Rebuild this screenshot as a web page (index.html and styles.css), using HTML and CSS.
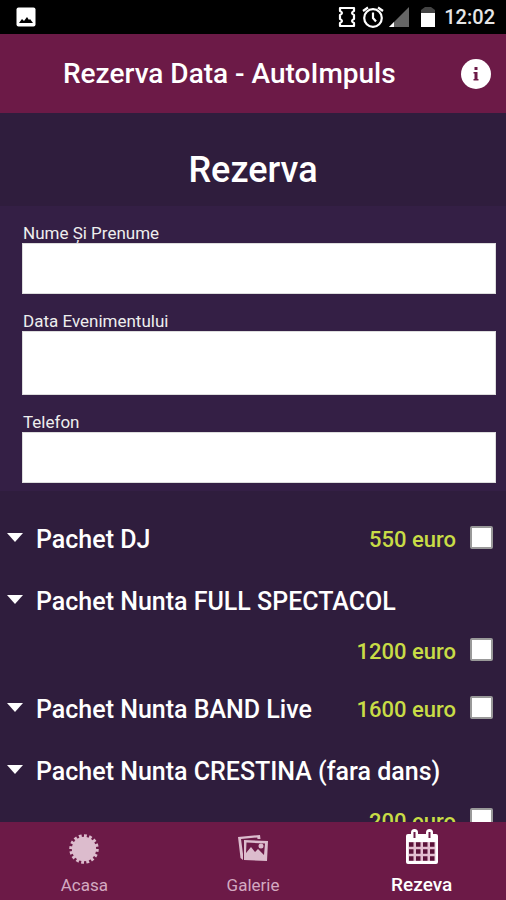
FILE: index.html
```html
<!DOCTYPE html>
<html lang="ro">
<head>
<meta charset="utf-8">
<meta name="viewport" content="width=device-width, initial-scale=1">
<title>Rezerva Data - AutoImpuls</title>
<link rel="stylesheet" href="styles.css">
</head>
<body>
<div class="status">
  <svg class="status-picture" viewBox="0 0 20 20" width="20" height="20" aria-hidden="true"><rect x="0.500" y="0.500" width="19" height="19" rx="2" fill="#fff"/><path d="M3 16l3-4 2 2 3-4 2 3 1-1 3 4z" fill="#000"/></svg>
  <div class="status-right">
    <svg viewBox="0 0 18 22" width="18" height="22" fill="none" stroke="#fff" stroke-width="2.200" stroke-linejoin="round" aria-hidden="true"><path d="M2 2h14v3q-4 2 0 4v4q-4 2 0 4v3H2v-3q4-2 0-4V9q4-2 0-4z"/></svg>
    <svg viewBox="0 0 22 22" width="22" height="22" fill="none" stroke="#fff" stroke-width="2.200" aria-hidden="true"><circle cx="11" cy="12" r="8.800"/><path d="M11 6.500V12l3 3.500M1 5l5-3.500M21 5l-5-3.500"/></svg>
    <svg class="status-signal" viewBox="0 0 20 20" width="20" height="20" aria-hidden="true"><path d="M20 0v20H0z" fill="#666"/><path d="M5 15v5H0z" fill="#fff"/></svg>
    <svg class="status-battery" viewBox="0 0 14 22" width="14" height="22" aria-hidden="true"><path d="M4 1h6l4 3v3H0V4z" fill="#444"/><path d="M0 7h14v14H0z" fill="#fff"/></svg>
    <span class="clock">12:02</span>
  </div>
</div>
<header class="topbar">
  <h1 class="topbar-title">Rezerva Data - AutoImpuls</h1>
  <button class="info" type="button" aria-label="Info">
    <svg viewBox="0 0 30 30" width="30" height="30" aria-hidden="true"><circle cx="15" cy="15" r="15" fill="#fff"/><path d="M13.500 8h3v3h-3zM12.500 13h4v7h1v1.500h-5V20h1v-5.500h-1z" fill="#6c1a47"/></svg>
  </button>
</header>
<main class="content">
  <h2 class="heading">Rezerva</h2>
  <form class="form">
    <label class="label" for="nume">Nume Şi Prenume</label>
    <input class="field" id="nume" type="text">
    <label class="label" for="data">Data Evenimentului</label>
    <input class="field field-tall" id="data" type="text">
    <label class="label" for="telefon">Telefon</label>
    <input class="field" id="telefon" type="tel">
  </form>
  <ul class="packages">
    <li class="package">
      <button class="package-name" type="button"><span class="caret"></span>Pachet DJ</button>
      <label class="price">550 euro<input class="tick" type="checkbox"></label>
    </li>
    <li class="package package-long">
      <button class="package-name" type="button"><span class="caret"></span>Pachet Nunta FULL SPECTACOL</button>
      <label class="price">1200 euro<input class="tick" type="checkbox"></label>
    </li>
    <li class="package">
      <button class="package-name" type="button"><span class="caret"></span>Pachet Nunta BAND Live</button>
      <label class="price">1600 euro<input class="tick" type="checkbox"></label>
    </li>
    <li class="package package-long">
      <button class="package-name" type="button"><span class="caret"></span>Pachet Nunta CRESTINA (fara dans)</button>
      <label class="price">200 euro<input class="tick" type="checkbox"></label>
    </li>
  </ul>
</main>
<nav class="tabs">
  <a class="tab" href="#acasa">
    <svg class="tab-icon" viewBox="0 0 30 30" width="30" height="30" aria-hidden="true"><circle cx="15" cy="15" r="12.200" fill="currentColor"/><circle cx="15" cy="15" r="12.500" fill="none" stroke="currentColor" stroke-width="4.500" pathLength="32" stroke-dasharray="1.100 .9"/></svg>
    <span>Acasa</span>
  </a>
  <a class="tab" href="#galerie">
    <svg class="tab-icon" viewBox="0 0 32 30" width="32" height="30" aria-hidden="true"><path d="M6 26L3.500 24 1 3l22-2 .5 4h-3l-.2-1.500L4 5l2 15z" fill="currentColor"/><path fill-rule="evenodd" d="M7 6l24 1-1 20-23-1zm2.500 2.500L9 19l5-6 4 5 3-3 6 6 1-11.500z" fill="currentColor"/><circle cx="24" cy="12" r="2.500" fill="currentColor"/></svg>
    <span>Galerie</span>
  </a>
  <a class="tab tab-active" href="#rezerva" aria-current="page">
    <svg viewBox="0 0 32 36" width="32" height="36" aria-hidden="true"><rect x="0" y="5" width="32" height="30" rx="2" fill="currentColor"/><rect x="5" y="0" width="7" height="12" rx="3.500" fill="currentColor"/><rect x="20" y="0" width="7" height="12" rx="3.500" fill="currentColor"/><path d="M8.500 3v6M23.500 3v6" stroke="#6c1a47" stroke-width="2"/><path d="M2.500 13h27v19h-27z" fill="#e3bfd0"/><path d="M3 15.500h26M3 22.500h26M3 29.500h26" stroke="#5a1238" stroke-width="4.500" stroke-dasharray="4.500 2.500"/></svg>
    <span>Rezeva</span>
  </a>
</nav>
</body>
</html>
```
FILE: styles.css
```css
* { box-sizing: border-box; }
body {
  margin: 0;
  height: 100vh;
  display: flex;
  flex-direction: column;
  overflow: hidden;
  background: #2f1d3d;
  color: #fff;
  font-family: Roboto, "Liberation Sans", sans-serif;
}
button {
  margin: 0;
  padding: 0;
  border: 0;
  background: none;
  color: inherit;
  font: inherit;
}
svg { display: block; }
.status {
  flex: none;
  height: 34px;
  padding: 0 11px 0 16px;
  display: flex;
  align-items: center;
  justify-content: space-between;
  background: #000;
}
.status-right { display: flex; align-items: center; gap: 6px; }
.status-signal { margin-left: -1px; }
.status-battery { margin: 0 3px 0 6px; }
.clock { font-size: 20px; line-height: 36px; font-weight: 500; color: #e6e6e6; }
.topbar {
  flex: none;
  height: 79px;
  padding: 0 15px 0 63px;
  display: flex;
  align-items: center;
  justify-content: space-between;
  background: #6c1a47;
}
.topbar-title { margin: 0; font-size: 28px; line-height: 37px; font-weight: 500; }
.content { flex: 1; min-height: 0; overflow: hidden; }
.heading {
  margin: 0;
  padding: 35px 0 14px;
  font-size: 36px;
  line-height: 44px;
  font-weight: 500;
  text-align: center;
}
.form {
  padding: 17px 10px 8px 22px;
  background: #341f45;
}
.label {
  display: block;
  padding-left: 1px;
  font-size: 17px;
  line-height: 20px;
  color: #eee;
}
.field {
  display: block;
  width: 100%;
  height: 51px;
  margin-bottom: 17px;
  padding: 0 12px;
  border: 1px solid #ddd;
  background: #fff;
  font: inherit;
  font-size: 20px;
}
.field-tall { height: 64px; }
.field:last-child { margin-bottom: 0; }
.packages { margin: 0; padding: 17px 13px 0 7px; list-style: none; }
.package {
  display: flex;
  flex-wrap: wrap;
  align-items: center;
}
.package-long { padding-bottom: 8px; }
.package-name {
  height: 62px;
  display: flex;
  align-items: center;
  font-size: 25px;
  font-weight: 500;
}
.caret {
  margin: 0 13px 4px 0;
  border: 8px solid transparent;
  border-top: 9px solid #fff;
  border-bottom: 0;
}
.price {
  height: 38px;
  margin-left: auto;
  display: flex;
  align-items: center;
  gap: 14px;
  font-size: 22px;
  font-weight: 500;
  color: #c8dc46;
}
.tick {
  appearance: none;
  width: 23px;
  height: 23px;
  margin: 0 0 4px;
  border: 2px solid #999;
  border-radius: 2px;
  background: #fff;
}
.tick:checked { background: #6c1a47; }
.tabs {
  flex: none;
  height: 78px;
  display: flex;
  background: #6c1a47;
}
.tab {
  flex: 1;
  padding-bottom: 4px;
  display: flex;
  flex-direction: column;
  align-items: center;
  justify-content: flex-end;
  gap: 10px;
  font-size: 17px;
  line-height: 22px;
  color: #d3a9c1;
  text-decoration: none;
}
.tab-icon { color: #dcbccd; }
.tab-active { gap: 9px; font-size: 19px; font-weight: 500; color: #fff; }
```
